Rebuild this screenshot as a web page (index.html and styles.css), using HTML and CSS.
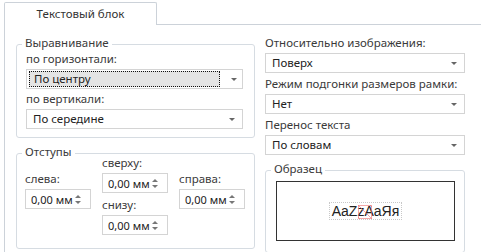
FILE: index.html
```html
<!DOCTYPE html>
<html lang="ru">
<head>
  <meta charset="UTF-8" />
  <title>Текстовый блок</title>
  <link rel="stylesheet" href="styles.css">
</head>
<body>
  <div class="tabs">
    <div class="tab">Текстовый блок</div>
  </div>
  <div class="panel">
    <div class="col-left">
      <div class="group align-group">
        <span class="legend">Выравнивание</span>
        <div class="field">
          <label>по горизонтали:</label>
          <div class="select focused"><span class="value">По центру</span><span class="arrow"></span></div>
        </div>
        <div class="field">
          <label>по вертикали:</label>
          <div class="select"><span class="value">По середине</span><span class="arrow"></span></div>
        </div>
      </div>

      <div class="group margin-group">
        <span class="legend">Отступы</span>
        <div class="spin-col side">
          <label>слева:</label>
          <div class="spin"><span>0,00 мм</span><span class="updown"></span></div>
        </div>
        <div class="spin-col">
          <label>сверху:</label>
          <div class="spin"><span>0,00 мм</span><span class="updown"></span></div>
          <label class="second">снизу:</label>
          <div class="spin"><span>0,00 мм</span><span class="updown"></span></div>
        </div>
        <div class="spin-col side">
          <label>справа:</label>
          <div class="spin"><span>0,00 мм</span><span class="updown"></span></div>
        </div>
      </div>
    </div>

    <div class="col-right">
      <div class="field">
        <label>Относительно изображения:</label>
        <div class="select"><span class="value">Поверх</span><span class="arrow"></span></div>
      </div>
      <div class="field">
        <label>Режим подгонки размеров рамки:</label>
        <div class="select"><span class="value">Нет</span><span class="arrow"></span></div>
      </div>
      <div class="field">
        <label>Перенос текста</label>
        <div class="select"><span class="value">По словам</span><span class="arrow"></span></div>
      </div>

      <div class="group sample-group">
        <span class="legend">Образец</span>
        <div class="preview">
          <span class="sample">AaZzAaЯя<span class="mark"></span></span>
        </div>
      </div>
    </div>
  </div>
</body>
</html>
```

FILE: styles.css
```css
body {
  margin: 0;
  background: #ffffff;
  font-family: "Noto Sans", "Open Sans", sans-serif;
  font-size: 11.5px;
  color: #3a3a3a;
  overflow: hidden;
  height: 252px;
}
.tabs {
  display: flex;
  padding: 2px 0 0 4px;
}
.tab {
  position: relative;
  z-index: 1;
  width: 151px;
  height: 22px;
  line-height: 22px;
  margin-bottom: -1px;
  border: 1px solid #ccd2d9;
  border-bottom: none;
  border-radius: 2px 2px 0 0;
  background: #ffffff;
  text-align: center;
  color: #333;
}
.panel {
  display: flex;
  align-items: flex-start;
  gap: 10px;
  margin-left: 4px;
  width: 600px;
  height: 300px;
  padding: 10px 0 0 11px;
  border: 1px solid #ccd2d9;
}
.col-left {
  width: 239px;
  padding-top: 9px;
}
.col-right {
  width: 200px;
  display: flex;
  flex-direction: column;
  gap: 3px;
}
.group {
  position: relative;
  border: 1px solid #d6dce2;
  border-radius: 3px;
}
.legend {
  position: absolute;
  top: -10px;
  left: 5px;
  padding: 0 3px;
  line-height: 16px;
  background: #ffffff;
  color: #3a3a3a;
}
.align-group {
  padding: 6px 11px 8px 9px;
  display: flex;
  flex-direction: column;
  gap: 2px;
}
.field label {
  display: block;
  line-height: 16px;
  white-space: nowrap;
}
.select {
  display: flex;
  align-items: center;
  box-sizing: border-box;
  height: 20px;
  margin-top: 2px;
  padding: 0 5px 0 6px;
  border: 1px solid #d4d4d4;
  background: #ffffff;
  color: #222;
}
.select .value {
  flex: 1;
  line-height: 16px;
}
.select.focused {
  padding-left: 2px;
}
.select.focused .value {
  box-sizing: border-box;
  flex: none;
  width: 191px;
  height: 16px;
  margin-right: 11px;
  padding-left: 4px;
  background: #e4e4e4;
  border: 1px dotted #111;
  line-height: 14px;
}
.arrow {
  width: 0;
  height: 0;
  margin-right: 2px;
  border-left: 3px solid transparent;
  border-right: 3px solid transparent;
  border-top: 3px solid #666;
}
.margin-group {
  margin-top: 15px;
  height: 93px;
  padding: 1px 0 0 8px;
  display: flex;
  gap: 11px;
}
.spin-col label {
  display: block;
  line-height: 16px;
}
.spin-col label.second {
  margin-top: 4px;
}
.spin-col.side {
  padding-top: 16px;
}
.spin {
  display: flex;
  align-items: center;
  justify-content: space-between;
  box-sizing: border-box;
  width: 66px;
  height: 20px;
  margin-top: 2px;
  padding: 0 9px 0 5px;
  border: 1px solid #d4d4d4;
  color: #222;
  font-size: 11px;
}
.updown {
  position: relative;
  width: 6px;
  height: 9px;
}
.updown::before,
.updown::after {
  content: "";
  position: absolute;
  left: 0;
  border-left: 3px solid transparent;
  border-right: 3px solid transparent;
}
.updown::before {
  top: 0;
  border-bottom: 3px solid #777;
}
.updown::after {
  bottom: 0;
  border-top: 3px solid #777;
}
.sample-group {
  margin-top: 12px;
  padding: 10px 9px 11px 10px;
}
.preview {
  display: flex;
  align-items: center;
  justify-content: center;
  height: 58px;
  border: 1px solid #333;
  background: #ffffff;
}
.sample {
  position: relative;
  padding: 0 2px;
  line-height: 16px;
  border: 1px dotted #c8c8c8;
  font-family: "Liberation Sans", Arial, sans-serif;
  font-size: 14px;
  color: #222;
}
.mark {
  position: absolute;
  top: 2px;
  left: 28px;
  width: 12px;
  height: 12px;
  border: 1px solid rgba(235, 110, 110, 0.6);
  background: linear-gradient(45deg, transparent 48%, rgba(235, 110, 110, 0.6) 50%, transparent 52%);
}
```
